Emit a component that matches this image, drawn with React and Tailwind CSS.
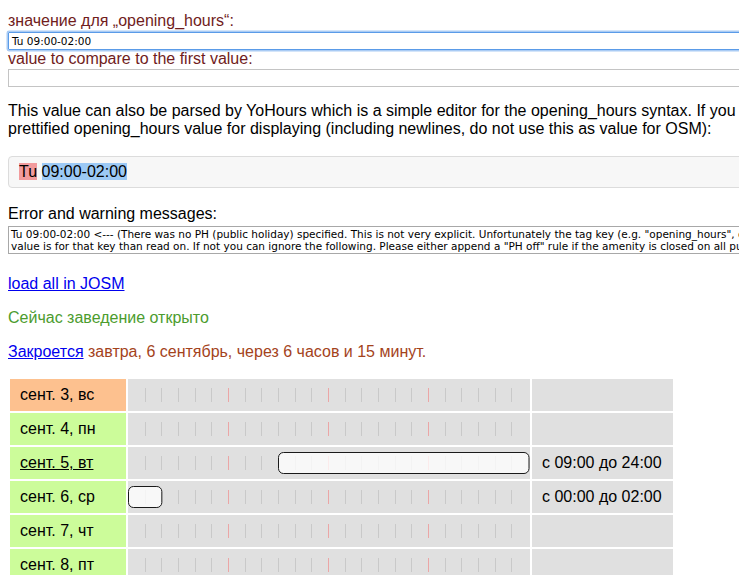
import React from "react";

const days = [
  { label: "сент. 3, вс", weekend: true },
  { label: "сент. 4, пн" },
  { label: "сент. 5, вт", today: true, open: [9, 24], text: "с 09:00 до 24:00" },
  { label: "сент. 6, ср", open: [0, 2], text: "с 00:00 до 02:00" },
  { label: "сент. 7, чт" },
  { label: "сент. 8, пт" },
];

const HOUR = 400 / 24;

function TimeBar({ open }) {
  const ticks = [];
  for (let h = 1; h < 24; h++) {
    ticks.push(
      <line
        key={h}
        x1={Math.round(h * HOUR) + 0.5}
        x2={Math.round(h * HOUR) + 0.5}
        y1={9}
        y2={23}
        stroke={h % 6 === 0 ? "#eba6a6" : "#c9c9c9"}
        strokeWidth={1}
      />
    );
  }
  return (
    <svg width="402" height="32" className="block">
      {ticks}
      {open && (
        <rect
          x={open[0] * HOUR + 0.5}
          y={5.5}
          width={open[0] === 0 ? open[1] * HOUR : (open[1] - open[0]) * HOUR + 0.5}
          height={21}
          rx={5}
          fill="rgba(255,255,255,0.78)"
          stroke="#1a1a1a"
          strokeWidth={1}
        />
      )}
    </svg>
  );
}

export default function App() {
  return (
    <div className="w-[739px] h-[575px] overflow-hidden bg-white font-['Liberation_Sans',Arial,sans-serif] text-black">
      <div className="w-[1200px] pl-[8px] pt-[12px]">
        {/* value inputs */}
        <div className="h-[18px] text-[16px] leading-[18px] text-[#701c1c]">
          значение для „opening_hours“:
        </div>
        <div className="mt-[2px] h-[18px] border border-[#5a9be8] shadow-[0_0_0_1.5px_#a9cbf4] rounded-[1px] px-[3px] font-['DejaVu_Sans',sans-serif] text-[10.5px] leading-[16px]">
          Tu 09:00-02:00
        </div>
        <div className="h-[18px] text-[16px] leading-[18px] text-[#701c1c]">
          value to compare to the first value:
        </div>
        <div className="mt-[1px] h-[18px] border border-[#c4c4c4]"></div>

        {/* yohours text */}
        <div className="mt-[15px] text-[16px] leading-[18px] whitespace-nowrap">
          <div>
            This value can also be parsed by YoHours which is a simple editor for the opening_hours syntax. If you want, the following is a
          </div>
          <div>
            prettified opening_hours value for displaying (including newlines, do not use this as value for OSM):
          </div>
        </div>

        {/* prettified value */}
        <div className="mt-[18px] h-[32px] border border-[#dcdcdc] rounded-[4px] bg-[#f7f7f7] pl-[10px] py-[6px] text-[16px] leading-[18px]">
          <span className="bg-[#f29b9d]">Tu</span>{" "}
          <span className="bg-[#9cc9f5]">09:00-02:00</span>
        </div>

        {/* warnings */}
        <div className="mt-[17px] h-[18px] text-[16px] leading-[18px]">
          Error and warning messages:
        </div>
        <div className="mt-[3px] h-[28px] border border-[#a8a8a8] px-[2px] pt-[2px] font-['DejaVu_Sans',sans-serif] text-[10.5px] leading-[11.5px] whitespace-nowrap overflow-hidden">
          <div>
            Tu 09:00-02:00 &lt;--- (There was no PH (public holiday) specified. This is not very explicit. Unfortunately the tag key (e.g. "opening_hours", or "lit") is unknown. If you know what the
          </div>
          <div>
            value is for that key than read on. If not you can ignore the following. Please either append a "PH off" rule if the amenity is closed on all public holidays or use something like
          </div>
        </div>

        <div className="mt-[21px] h-[18px] text-[16px] leading-[18px]">
          <a href="#" className="text-[#0000ee] underline">
            load all in JOSM
          </a>
        </div>
        <div className="mt-[16px] h-[18px] text-[16px] leading-[18px] text-[#4c9c2e]">
          Сейчас заведение открыто
        </div>
        <div className="mt-[16px] h-[18px] text-[16px] leading-[18px] text-[#a4431c]">
          <a href="#" className="text-[#0000ee] underline">
            Закроется
          </a>{" "}
          завтра, 6 сентябрь, через 6 часов и 15 минут.
        </div>

        {/* week table */}
        <table className="mt-[16px] border-separate border-spacing-[2px] text-[16px] leading-[18px]">
          <tbody>
            {days.map((d) => (
              <tr key={d.label}>
                <td
                  className={
                    "w-[116px] h-[32px] p-0 pl-[10px] whitespace-nowrap " +
                    (d.weekend ? "bg-[#fdc18f]" : "bg-[#ccfc9a]")
                  }
                >
                  <span className={d.today ? "underline" : ""}>{d.label}</span>
                </td>
                <td className="w-[402px] h-[32px] p-0 bg-[#e0e0e0]">
                  <TimeBar open={d.open} />
                </td>
                <td className="w-[141px] h-[32px] p-0 pl-[10px] bg-[#e0e0e0] whitespace-nowrap">
                  {d.text}
                </td>
              </tr>
            ))}
          </tbody>
        </table>
      </div>
    </div>
  );
}
